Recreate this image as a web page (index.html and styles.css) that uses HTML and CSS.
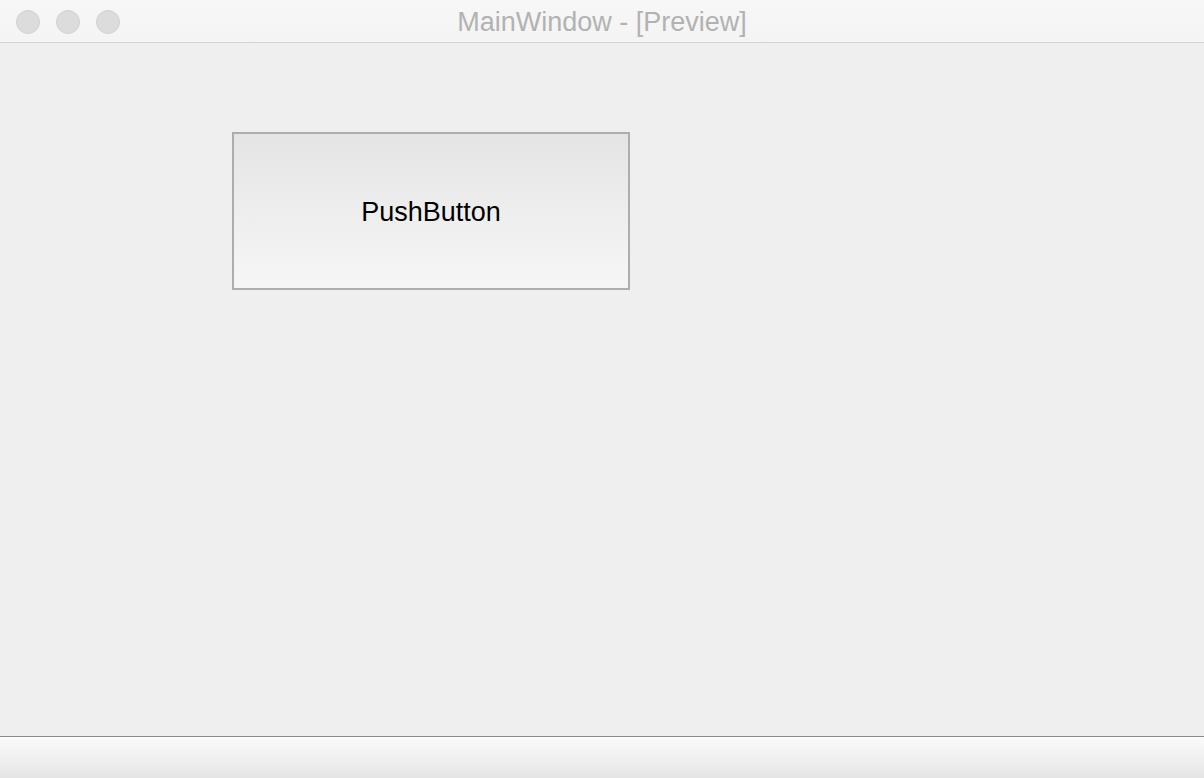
FILE: index.html
```html
<!DOCTYPE html>
<html>
<head>
<meta charset="utf-8">
<link rel="stylesheet" href="styles.css">
</head>
<body>
<div class="window">
  <div class="titlebar">
    <div class="lights">
      <span class="light"></span>
      <span class="light"></span>
      <span class="light"></span>
    </div>
    <div class="title">MainWindow - [Preview]</div>
  </div>
  <div class="content">
    <button class="push">PushButton</button>
  </div>
  <div class="statusbar"></div>
</div>
</body>
</html>
```
FILE: styles.css
```css
html, body {
  margin: 0;
  padding: 0;
  width: 1204px;
  height: 778px;
  overflow: hidden;
  font-family: "Liberation Sans", Arial, sans-serif;
}
.window {
  display: flex;
  flex-direction: column;
  width: 1204px;
  height: 778px;
  background: #efefef;
}
.titlebar {
  position: relative;
  height: 42px;
  flex: 0 0 42px;
  background: linear-gradient(#f7f7f7, #f4f4f4);
  border-bottom: 1px solid #d3d3d3;
  display: flex;
  align-items: center;
  justify-content: center;
}
.lights {
  position: absolute;
  left: 16px;
  top: 10px;
  display: flex;
  gap: 16px;
}
.light {
  width: 22px;
  height: 22px;
  border-radius: 50%;
  background: #dcdcdc;
  border: 1px solid #d2d2d2;
}
.title {
  font-size: 27px;
  color: #b2b2b2;
  margin-top: 3px;
}
.content {
  flex: 1;
  padding: 89px 0 0 232px;
}
.push {
  display: flex;
  align-items: center;
  justify-content: center;
  width: 398px;
  height: 158px;
  box-sizing: border-box;
  border: 2px solid #adadad;
  background: linear-gradient(#e4e4e4, #f4f4f4 85%, #f5f5f5);
  font-family: "Liberation Sans", Arial, sans-serif;
  font-size: 27px;
  color: #000;
  padding: 3px 0 0 0;
  margin: 0;
}
.statusbar {
  flex: 0 0 41px;
  height: 41px;
  border-top: 1px solid #8a8a8a;
  background: linear-gradient(#fafafa, #f2f2f2 40%, #e5e5e5);
}
```
